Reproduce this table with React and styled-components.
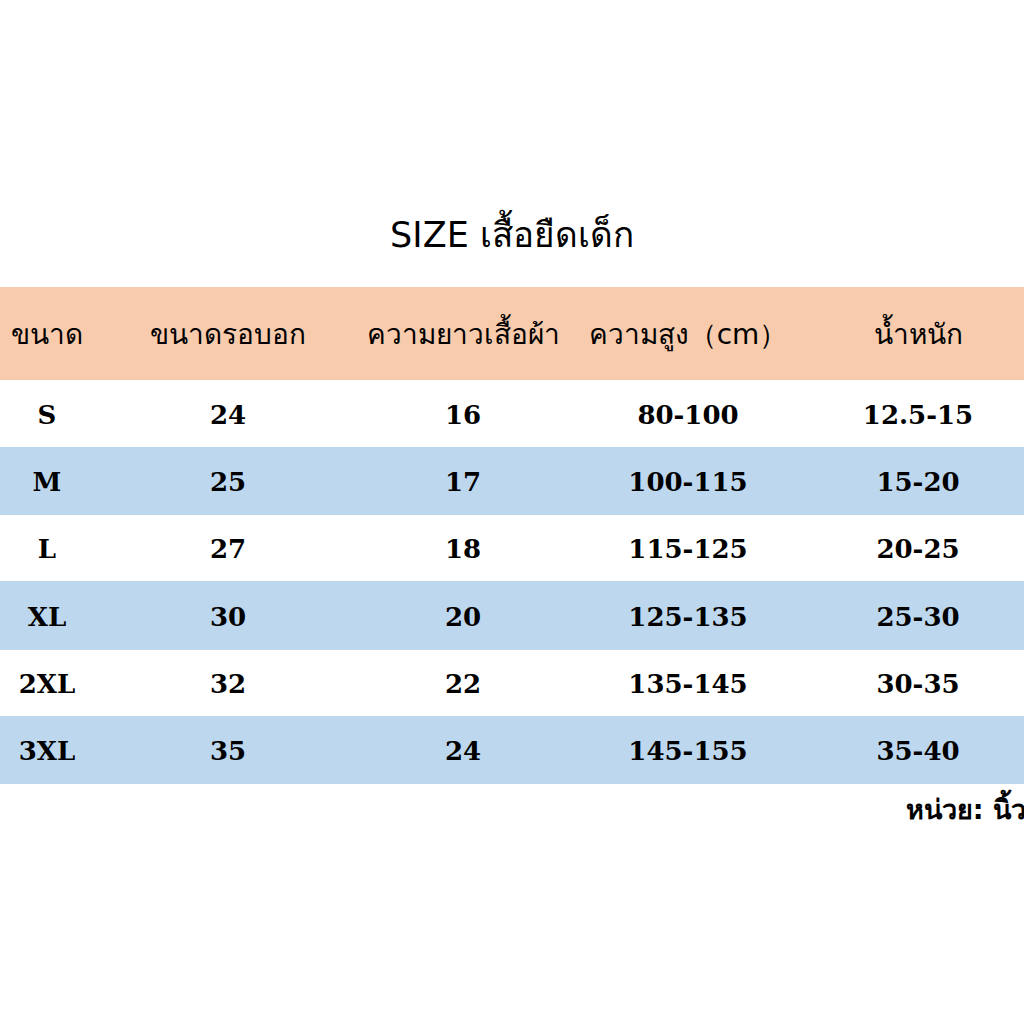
import React from 'react';
import styled, { createGlobalStyle } from 'styled-components';

const GlobalStyle = createGlobalStyle`
  html, body {
    margin: 0;
    padding: 0;
    background: #ffffff;
  }
  body {
    width: 1024px;
    height: 1024px;
    overflow: hidden;
  }
`;

const Page = styled.div`
  width: 1024px;
  height: 1024px;
  display: flex;
  flex-direction: column;
  padding-top: 208px;
  box-sizing: border-box;
  font-family: "DejaVu Sans", "Noto Sans", sans-serif;
  color: #000;
`;

const Title = styled.h1`
  margin: 0;
  height: 79px;
  text-align: center;
  font-size: 35px;
  font-weight: 400;
  line-height: 54px;
`;

const Table = styled.div`
  display: grid;
  grid-template-columns: 94px 268px 202px 248px 212px;
`;

const Row = styled.div`
  display: contents;
`;

const Cell = styled.div`
  height: ${(p) => p.$h}px;
  background: ${(p) => p.$bg};
  display: flex;
  align-items: center;
  justify-content: center;
  white-space: nowrap;
`;

const HeadText = styled.span`
  font-family: "DejaVu Sans", "Noto Sans", sans-serif;
  font-size: 28px;
`;

const DataText = styled.span`
  font-family: "DejaVu Serif", "Liberation Serif", serif;
  font-weight: 700;
  font-size: 26px;
  padding-top: 2px;
`;

const Note = styled.div`
  text-align: right;
  font-size: 27px;
  font-weight: 700;
  padding-top: 4px;
  margin-right: -2px;
`;

const headers = ['ขนาด', 'ขนาดรอบอก', 'ความยาวเสื้อผ้า', 'ความสูง（cm）', 'น้ำหนัก'];

const rows = [
  ['S', '24', '16', '80-100', '12.5-15'],
  ['M', '25', '17', '100-115', '15-20'],
  ['L', '27', '18', '115-125', '20-25'],
  ['XL', '30', '20', '125-135', '25-30'],
  ['2XL', '32', '22', '135-145', '30-35'],
  ['3XL', '35', '24', '145-155', '35-40'],
];

const heights = [67, 68, 66, 69, 66, 68];

export default function App() {
  return (
    <>
      <GlobalStyle />
      <Page>
        <Title>SIZE เสื้อยืดเด็ก</Title>
        <Table>
          <Row>
            {headers.map((h) => (
              <Cell key={h} $h={93} $bg="#f8cbad">
                <HeadText>{h}</HeadText>
              </Cell>
            ))}
          </Row>
          {rows.map((r, i) => (
            <Row key={r[0]}>
              {r.map((v, j) => (
                <Cell key={j} $h={heights[i]} $bg={i % 2 ? '#bdd7ee' : '#ffffff'}>
                  <DataText>{v}</DataText>
                </Cell>
              ))}
            </Row>
          ))}
        </Table>
        <Note>หน่วย: นิ้ว</Note>
      </Page>
    </>
  );
}
